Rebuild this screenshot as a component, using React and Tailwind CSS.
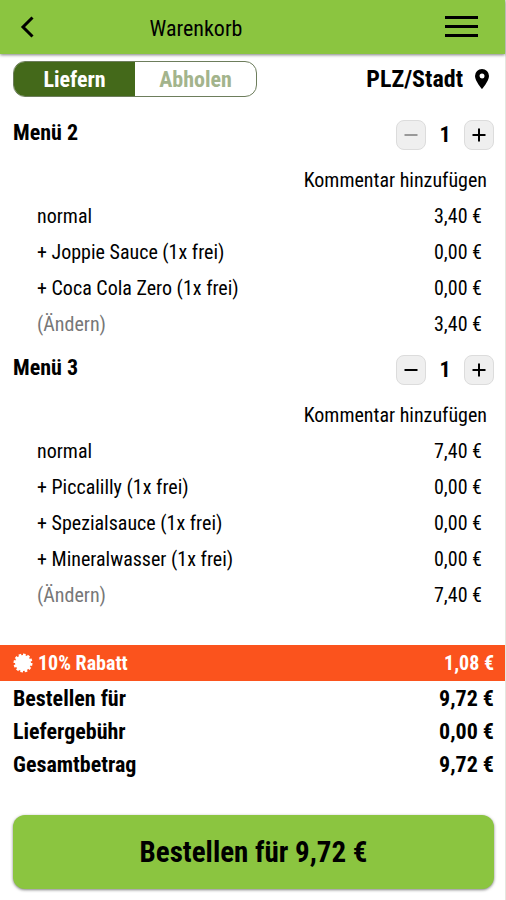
import React, { useState } from "react";

const menus = [
  {
    name: "Menü 2",
    minusDisabled: true,
    total: "3,40 €",
    items: [
      { label: "normal", price: "3,40 €" },
      { label: "+ Joppie Sauce (1x frei)", price: "0,00 €" },
      { label: "+ Coca Cola Zero (1x frei)", price: "0,00 €" },
    ],
  },
  {
    name: "Menü 3",
    minusDisabled: false,
    total: "7,40 €",
    items: [
      { label: "normal", price: "7,40 €" },
      { label: "+ Piccalilly (1x frei)", price: "0,00 €" },
      { label: "+ Spezialsauce (1x frei)", price: "0,00 €" },
      { label: "+ Mineralwasser (1x frei)", price: "0,00 €" },
    ],
  },
];

const sums = [
  { label: "Bestellen für", price: "9,72 €" },
  { label: "Liefergebühr", price: "0,00 €" },
  { label: "Gesamtbetrag", price: "9,72 €" },
];

function StepButton({ label, disabled, plus }) {
  return (
    <button
      aria-label={label}
      disabled={disabled}
      className="flex size-[30px] items-center justify-center rounded-lg border border-[#dcdcdc] bg-[#efefef] text-black disabled:text-[#999999]"
    >
      <svg width="14" height="14" viewBox="0 0 14 14" stroke="currentColor" strokeWidth="2">
        <path d="M0.5 7h13" />
        {plus ? <path d="M7 0.5v13" /> : null}
      </svg>
    </button>
  );
}

function Menu({ menu }) {
  return (
    <section className="mb-2.5">
      <div className="flex h-9 items-center justify-between pr-[11px] pl-[13px]">
        <h2 className="pb-1 text-[22px] leading-7 font-bold">{menu.name}</h2>
        <div className="flex items-center">
          <StepButton label="Weniger" disabled={menu.minusDisabled} />
          <span className="w-[38px] text-center text-[22px] leading-7 font-bold">1</span>
          <StepButton label="Mehr" plus />
        </div>
      </div>
      <div className="mt-[9px] flex h-9 items-center justify-end pr-[18px]">
        <button className="text-[20px] leading-6">Kommentar hinzufügen</button>
      </div>
      <ul className="pr-[23px] pl-[37px] text-[20px] leading-9">
        {menu.items.map((item) => (
          <li key={item.label} className="flex justify-between">
            <span>{item.label}</span>
            <span>{item.price}</span>
          </li>
        ))}
        <li className="flex justify-between">
          <button className="text-[#777777]">(Ändern)</button>
          <span>{menu.total}</span>
        </li>
      </ul>
    </section>
  );
}

export default function App() {
  const [mode, setMode] = useState("liefern");

  return (
    <div className="flex min-h-screen flex-col border-r border-[#e4e6df] bg-white font-['Roboto_Condensed','Liberation_Sans_Narrow',Roboto,sans-serif] text-black">
      <header className="flex h-[54px] items-center bg-[#8bc540] pr-[27px] pl-5 shadow-[0_1px_3px_rgba(0,0,0,0.5)]">
        <button aria-label="Zurück" className="w-[33px]">
          <svg width="14" height="22" viewBox="0 0 14 22" fill="none" stroke="currentColor" strokeWidth="3">
            <path d="M12.5 1.5L3 11l9.5 9.5" />
          </svg>
        </button>
        <h1 className="flex-1 pt-1 pr-[106px] text-center text-[22px] leading-7">Warenkorb</h1>
        <button aria-label="Menü öffnen">
          <svg width="33" height="22" viewBox="0 0 33 22" stroke="currentColor" strokeWidth="3">
            <path d="M0 1.5h33M0 10.5h33M0 19.5h33" />
          </svg>
        </button>
      </header>

      <div className="mt-[7px] mb-5 flex items-center justify-between pr-[11px] pl-[13px]">
        <div className="flex h-9 w-[244px] overflow-hidden rounded-xl border border-[#6d7d5c] text-[22px] leading-9 font-bold">
          <button
            onClick={() => setMode("liefern")}
            aria-pressed={mode === "liefern"}
            className="flex-1 text-[#a3b48c] aria-pressed:bg-[#44691a] aria-pressed:text-white"
          >
            Liefern
          </button>
          <button
            onClick={() => setMode("abholen")}
            aria-pressed={mode === "abholen"}
            className="flex-1 text-[#a3b48c] aria-pressed:bg-[#44691a] aria-pressed:text-white"
          >
            Abholen
          </button>
        </div>
        <button className="flex items-center gap-3 pr-[5px] text-[24px] leading-9 font-bold">
          PLZ/Stadt
          <svg width="14" height="20" viewBox="0 0 14 20" fill="currentColor">
            <path
              fillRule="evenodd"
              d="M7 0a7 7 0 0 0-7 7c0 5 7 13 7 13s7-8 7-13a7 7 0 0 0-7-7zm0 4.500a2.500 2.500 0 1 1 0 5 2.500 2.500 0 0 1 0-5z"
            />
          </svg>
        </button>
      </div>

      <main className="flex-1">
        {menus.map((menu) => (
          <Menu key={menu.name} menu={menu} />
        ))}
      </main>

      <footer className="pb-[11px]">
        <div className="flex h-9 items-center bg-[#fb531d] pr-[11px] pl-[13px] text-[20px] leading-6 font-bold text-white">
          <svg width="20" height="20" viewBox="0 0 20 20" className="mr-[5px]">
            <circle cx="10" cy="10" r="8" fill="currentColor" />
            <circle
              cx="10"
              cy="10"
              r="8"
              fill="none"
              stroke="currentColor"
              strokeWidth="3"
              pathLength="24"
              strokeDasharray="1.2 0.8"
            />
          </svg>
          <span className="flex-1">10% Rabatt</span>
          <span>1,08 €</span>
        </div>
        <dl className="pt-px pr-[11px] pl-[13px] text-[22px] leading-[33px] font-bold">
          {sums.map((sum) => (
            <div key={sum.label} className="flex justify-between">
              <dt>{sum.label}</dt>
              <dd>{sum.price}</dd>
            </div>
          ))}
        </dl>
        <div className="mt-[34px] pr-[11px] pl-[13px]">
          <button className="h-[74px] w-full rounded-xl bg-[#8bc540] text-[29px] leading-9 font-bold shadow-[0_1px_3px_rgba(0,0,0,0.5)]">
            Bestellen für 9,72 €
          </button>
        </div>
      </footer>
    </div>
  );
}
